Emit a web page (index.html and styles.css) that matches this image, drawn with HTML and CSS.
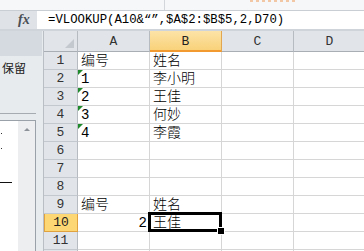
FILE: index.html
```html
<!doctype html>
<html lang="zh">
<head>
    <meta charset="UTF-8">
    <title>VLOOKUP</title>
    <link rel="stylesheet" href="styles.css">
</head>
<body>

<div class="app">
    <div class="ribbon-edge">
        <span class="ribbon-sep"></span>
        <span class="ribbon-mark"></span>
    </div>

    <div class="formula-bar">
        <span class="fx">fx</span>
        <div class="formula-input">=VLOOKUP(A10&“”,$A$2:$B$5,2,D70)</div>
    </div>

    <div class="main">
        <aside class="side-panel">
            <div class="panel-head"></div>
            <div class="panel-text">保留</div>
            <div class="panel-rule"></div>
            <div class="panel-box">
                <div class="panel-list">
                    <span class="dot"></span>
                    <span class="dot"></span>
                    <span class="dash"></span>
                </div>
                <div class="panel-scroll"><span class="arrow-up"></span></div>
            </div>
        </aside>

        <div class="sheet">
            <div class="corner"><span class="corner-tri"></span></div>
            <div class="ch">A</div>
            <div class="ch ch-active">B</div>
            <div class="ch">C</div>
            <div class="ch">D</div>

            <div class="rh">1</div><div class="c">编号</div><div class="c">姓名</div><div class="c"></div><div class="c"></div>
            <div class="rh">2</div><div class="c warn">1</div><div class="c">李小明</div><div class="c"></div><div class="c"></div>
            <div class="rh">3</div><div class="c warn">2</div><div class="c">王佳</div><div class="c"></div><div class="c"></div>
            <div class="rh">4</div><div class="c warn">3</div><div class="c">何妙</div><div class="c"></div><div class="c"></div>
            <div class="rh">5</div><div class="c warn">4</div><div class="c">李霞</div><div class="c"></div><div class="c"></div>
            <div class="rh">6</div><div class="c"></div><div class="c"></div><div class="c"></div><div class="c"></div>
            <div class="rh">7</div><div class="c"></div><div class="c"></div><div class="c"></div><div class="c"></div>
            <div class="rh">8</div><div class="c"></div><div class="c"></div><div class="c"></div><div class="c"></div>
            <div class="rh">9</div><div class="c">编号</div><div class="c">姓名</div><div class="c"></div><div class="c"></div>
            <div class="rh rh-active">10</div><div class="c num">2</div><div class="c selected">王佳<span class="handle"></span></div><div class="c"></div><div class="c"></div>
            <div class="rh">11</div><div class="c"></div><div class="c"></div><div class="c"></div><div class="c"></div>
            <div class="rh"></div><div class="c"></div><div class="c"></div><div class="c"></div><div class="c"></div>
        </div>
    </div>
</div>

</body>
</html>
```

FILE: styles.css
```css
html, body {
    margin: 0;
    padding: 0;
    overflow: hidden;
}
body {
    width: 364px;
    height: 251px;
    background: #e9ecef;
    font-family: "Liberation Mono", "Noto Sans CJK SC", monospace;
}

/* top strip left over from the ribbon */
.ribbon-edge {
    position: relative;
    height: 10px;
    background: #f6f7f8;
    border-bottom: 1px solid #c9ced4;
    overflow: hidden;
}
.ribbon-sep {
    position: absolute;
    left: 164px;
    top: 0;
    width: 1px;
    height: 10px;
    background: #d3d7dc;
}
.ribbon-mark {
    position: absolute;
    left: 250px;
    top: 0;
    width: 46px;
    height: 2px;
    background: repeating-linear-gradient(90deg, #f1c7a6 0 3px, transparent 3px 6px);
}

/* formula bar */
.formula-bar {
    display: flex;
    height: 18px;
    background: #dfe3e8;
    border-bottom: 2px solid #cfd4da;
}
.fx {
    width: 37px;
    box-sizing: border-box;
    padding-left: 18px;
    font-family: "Liberation Serif", serif;
    font-style: italic;
    font-weight: bold;
    font-size: 14px;
    line-height: 18px;
    color: #4a4f55;
}
.formula-input {
    flex: 1;
    background: #fff;
    padding-left: 11px;
    font-size: 12.3px;
    line-height: 19px;
    color: #000;
    white-space: nowrap;
    overflow: hidden;
}

.main {
    display: flex;
}

/* task pane on the left */
.side-panel {
    width: 44px;
    flex: none;
    height: 220px;
    background: #e8ebee;
    border-right: 1px solid #b9bec5;
    box-sizing: border-box;
    font-family: "Noto Sans CJK SC", sans-serif;
}
.panel-head {
    width: 42px;
    height: 25px;
    background: #d5dae0;
}
.panel-text {
    padding: 4px 0 0 2px;
    font-size: 12px;
    line-height: 16px;
    color: #222;
}
.panel-rule {
    margin-top: 37px;
    width: 36px;
    height: 1px;
    background: #a6abb1;
}
.panel-box {
    display: flex;
    margin-top: 6px;
    width: 36px;
    height: 140px;
    border-top: 1px solid #9ba1a8;
    border-right: 1px solid #9ba1a8;
    box-sizing: border-box;
}
.panel-list {
    width: 18px;
    background: #fff;
    display: flex;
    flex-direction: column;
}
.dot {
    width: 1px;
    height: 1px;
    margin: 12px 0 0 1px;
    background: #333;
}
.dot + .dot {
    margin-top: 14px;
}
.dash {
    width: 12px;
    height: 1px;
    margin-top: 33px;
    background: #111;
}
.panel-scroll {
    flex: 1;
    background: #eceef0;
    display: flex;
    justify-content: center;
}
.arrow-up {
    margin-top: 7px;
    width: 0;
    height: 0;
    border-left: 3px solid transparent;
    border-right: 3px solid transparent;
    border-bottom: 3px solid #8d9298;
}

/* sheet grid */
.sheet {
    display: grid;
    grid-template-columns: 34px 72px 72px 72px 72px;
    grid-template-rows: 21px;
    grid-auto-rows: 18px;
    background: #fff;
    overflow: hidden;
    flex: 1;
    height: 220px;
    font-size: 13px;
}
.corner {
    position: relative;
    background: #e1e5ea;
    border-right: 1px solid #b6bbc2;
    border-bottom: 1px solid #a9aeb5;
}
.corner-tri {
    position: absolute;
    right: 3px;
    bottom: 3px;
    width: 0;
    height: 0;
    border-left: 9px solid transparent;
    border-bottom: 9px solid #c3c8ce;
}
.ch {
    background: #e1e5ea;
    border-right: 1px solid #b6bbc2;
    border-bottom: 1px solid #a9aeb5;
    text-align: center;
    line-height: 21px;
    color: #333;
}
.ch-active {
    background: linear-gradient(#fce3a7, #f9d27a);
    border-right-color: #e2a650;
    border-bottom: 2px solid #f29a30;
    color: #222;
}
.rh {
    background: #e1e5ea;
    border-right: 1px solid #b6bbc2;
    border-bottom: 1px solid #c3c8ce;
    text-align: center;
    line-height: 18px;
    color: #333;
}
.rh-active {
    background: #fcd773;
    border: 1px solid #e0a23e;
    border-top: none;
    color: #222;
}
.c {
    position: relative;
    border-right: 1px solid #d6d6d6;
    border-bottom: 1px solid #d6d6d6;
    padding: 0 0 0 3px;
    font-size: 14px;
    font-weight: 300;
    line-height: 19px;
    color: #000;
    white-space: nowrap;
}
.num {
    text-align: right;
    padding: 0 2px 0 0;
}
.warn::before {
    content: "";
    position: absolute;
    left: 0;
    top: 0;
    width: 0;
    height: 0;
    border-top: 5px solid #1e8a2c;
    border-right: 5px solid transparent;
}
.selected::after {
    content: "";
    position: absolute;
    left: -2px;
    top: -2px;
    right: -1px;
    bottom: -1px;
    border: 3px solid #000;
}
.handle {
    position: absolute;
    right: -4px;
    bottom: -4px;
    width: 6px;
    height: 6px;
    background: #000;
    border: 1px solid #fff;
    z-index: 1;
}
```
